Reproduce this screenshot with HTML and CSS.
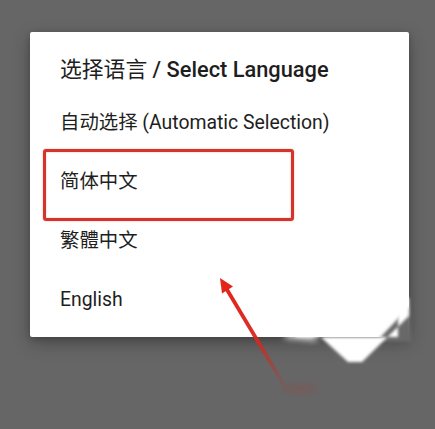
FILE: index.html
```html
<!DOCTYPE html>
<html lang="zh">
<head>
<meta charset="utf-8">
<title>Select Language</title>
<link rel="stylesheet" href="styles.css">
</head>
<body>
<div class="screen">
  <div class="dialog">
    <div class="title">选择语言 <span class="title-en">/ Select Language</span></div>
    <ul class="options">
      <li class="option">自动选择 (Automatic Selection)</li>
      <li class="option">简体中文</li>
      <li class="option">繁體中文</li>
      <li class="option">English</li>
    </ul>
  </div>
  <div class="highlight"></div>
  <svg class="overlay" width="435" height="429" viewBox="0 0 435 429">
    <defs>
      <filter id="soft" x="-20%" y="-20%" width="140%" height="140%">
        <feGaussianBlur stdDeviation="1.4"/>
      </filter>
      <filter id="softer" x="-50%" y="-50%" width="200%" height="200%">
        <feGaussianBlur stdDeviation="3"/>
      </filter>
      <linearGradient id="fade" x1="226" y1="288" x2="287" y2="390" gradientUnits="userSpaceOnUse">
        <stop offset="0" stop-color="#e3241a" stop-opacity="1"/>
        <stop offset="0.5" stop-color="#d8281f" stop-opacity="0.95"/>
        <stop offset="1" stop-color="#b8302a" stop-opacity="0"/>
      </linearGradient>
    </defs>
    <polygon points="410,306 412,342 376,342" fill="#676767" filter="url(#soft)"/>
    <polygon points="296,337 296,331 314,331 348,362 362,362 409,316 409,298 398,298 398,337" fill="#ffffff" filter="url(#soft)"/>
    <polygon points="284,338 288,331 312,331 318,341" fill="#ffffff" filter="url(#softer)" opacity="0.85"/>
    <ellipse cx="300" cy="389" rx="18" ry="4" fill="#a0413c" opacity="0.3" filter="url(#softer)"/>
    <line x1="226" y1="288" x2="287" y2="390" stroke="url(#fade)" stroke-width="3.8" stroke-linecap="round"/>
    <polygon points="220,278 233,286.5 222,293.5" fill="#e3241a"/>
  </svg>
</div>
</body>
</html>
```
FILE: styles.css
```css
html, body {
  margin: 0;
  padding: 0;
}
body {
  background: #666666;
  font-family: Roboto, "Noto Sans CJK SC", "Noto Sans", sans-serif;
  color: #212121;
}
.screen {
  position: relative;
  width: 435px;
  height: 429px;
  overflow: hidden;
  padding: 32px 0 0 30px;
  box-sizing: border-box;
}
.dialog {
  width: 379px;
  height: 305px;
  box-sizing: border-box;
  background: #ffffff;
  border-radius: 2px;
  padding: 24px 0 8px 0;
  box-shadow: 0 6px 18px rgba(0, 0, 0, 0.28), 0 2px 6px rgba(0, 0, 0, 0.18);
}
.title {
  font-size: 21.8px;
  line-height: 28px;
  padding-left: 30px;
  color: #1e1e1e;
  white-space: nowrap;
}
.title-en {
  font-weight: 500;
}
.options {
  list-style: none;
  margin: 9px 0 0 0;
  padding: 0;
}
.option {
  font-size: 19.4px;
  line-height: 59px;
  height: 59px;
  padding-left: 30px;
  color: #1e1e1e;
  white-space: nowrap;
}
.highlight {
  position: absolute;
  left: 43px;
  top: 149px;
  width: 251px;
  height: 72px;
  box-sizing: border-box;
  border: 3px solid #d3352d;
  border-radius: 3px;
  box-shadow: 0 0 1.5px rgba(220, 50, 40, 0.55), inset 0 0 1.5px rgba(220, 50, 40, 0.55);
}
.overlay {
  position: absolute;
  left: 0;
  top: 0;
  pointer-events: none;
}
```
